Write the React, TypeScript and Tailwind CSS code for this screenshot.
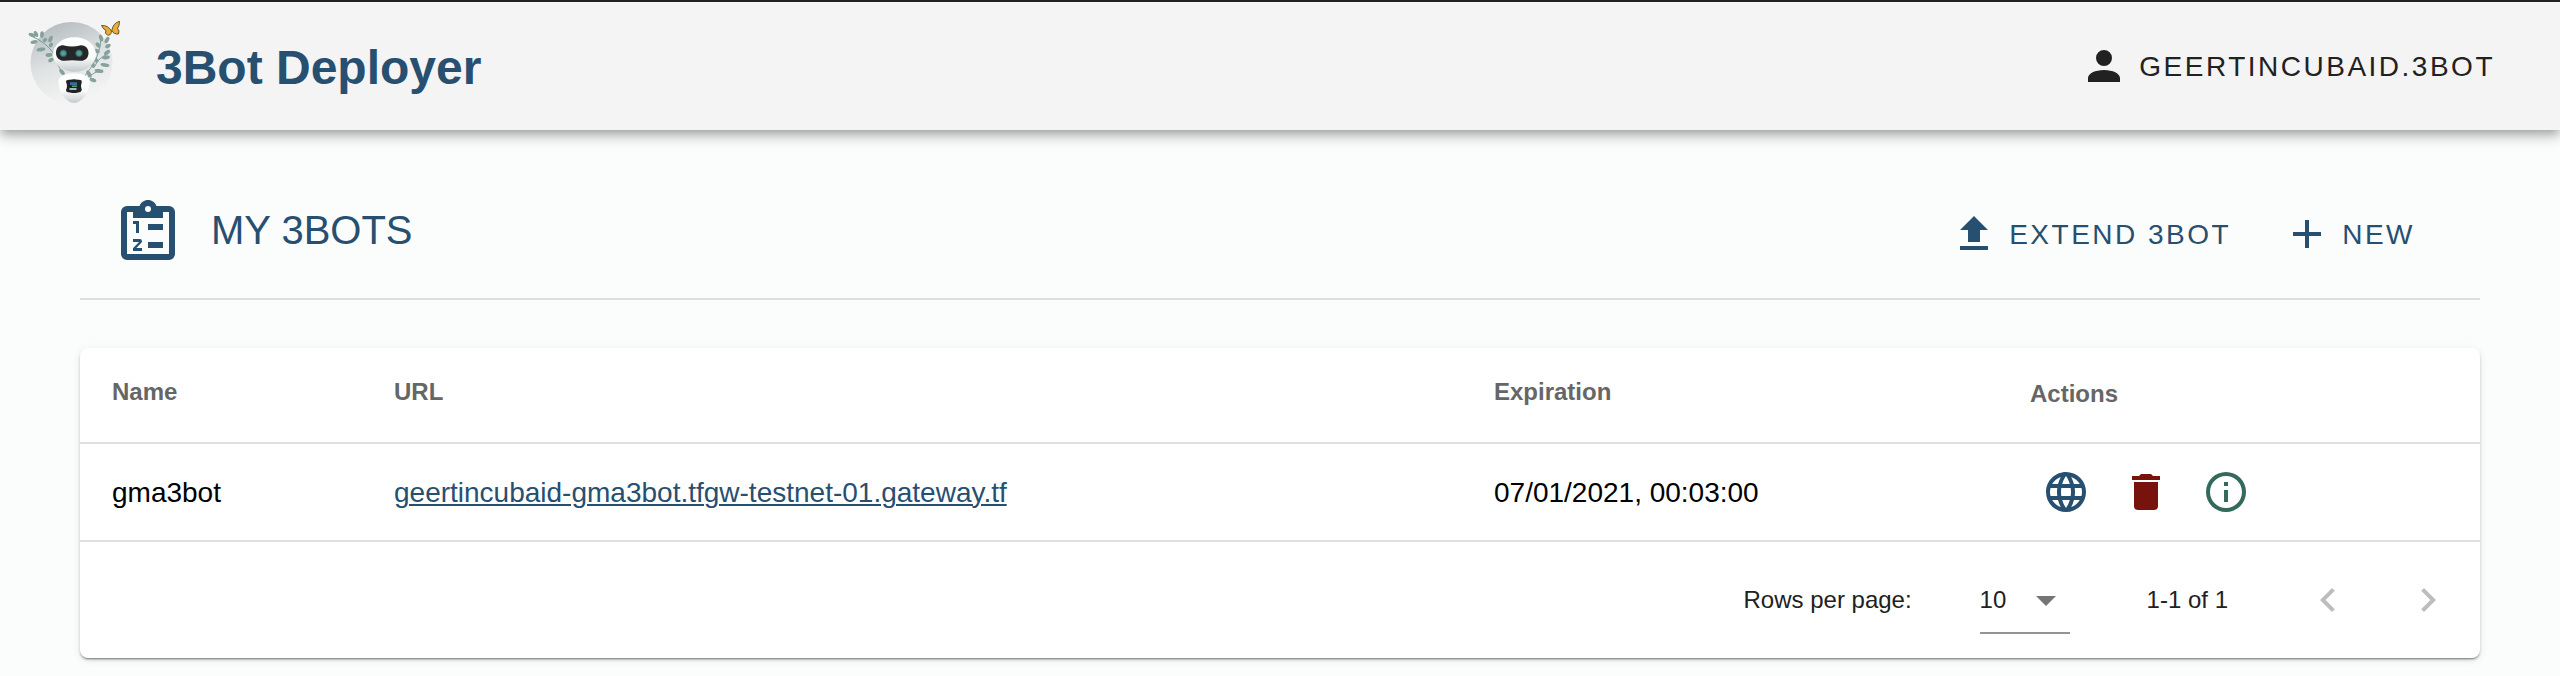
import React from "react";

type IconProps = { d: string; className?: string };

function Icon({ d, className = "" }: IconProps) {
  return (
    <svg viewBox="0 0 24 24" className={`shrink-0 fill-current ${className}`} aria-hidden="true">
      <path fillRule="evenodd" d={d} />
    </svg>
  );
}

const icons = {
  account:
    "M12,4A4,4 0 0,1 16,8A4,4 0 0,1 12,12A4,4 0 0,1 8,8A4,4 0 0,1 12,4M12,14C16.42,14 20,15.79 20,18V20H4V18C4,15.79 7.58,14 12,14Z",
  clipboard:
    "M19,3H14.82C14.4,1.84 13.3,1 12,1C10.7,1 9.6,1.84 9.18,3H5A2,2 0 0,0 3,5V19A2,2 0 0,0 5,21H19A2,2 0 0,0 21,19V5A2,2 0 0,0 19,3M12,3A1,1 0 0,1 13,4A1,1 0 0,1 12,5A1,1 0 0,1 11,4A1,1 0 0,1 12,3M5,5H7V7H17V5H19V19H5V5M7,8H9V12H8V9H7V8M12,9H17V11H12V9M7,14H9.25A0.75,0.75 0 0,1 10,14.75C10,14.95 9.92,15.14 9.79,15.27L8.12,17H10V18H7V17.08L9,15H7V14M12,15H17V17H12V15Z",
  upload: "M9,16V10H5L12,3L19,10H15V16H9M5,20V18H19V20H5Z",
  plus: "M19,13H13V19H11V13H5V11H11V5H13V11H19V13Z",
  web: "M16.36,14C16.44,13.34 16.5,12.68 16.5,12C16.5,11.32 16.44,10.66 16.36,10H19.74C19.9,10.64 20,11.31 20,12C20,12.69 19.9,13.36 19.74,14M14.59,19.56C15.19,18.45 15.65,17.25 15.97,16H18.92C17.96,17.65 16.43,18.93 14.59,19.56M14.34,14H9.66C9.56,13.34 9.5,12.68 9.5,12C9.5,11.32 9.56,10.65 9.66,10H14.34C14.43,10.65 14.5,11.32 14.5,12C14.5,12.68 14.43,13.34 14.34,14M12,19.96C11.17,18.76 10.5,17.43 10.09,16H13.91C13.5,17.43 12.83,18.76 12,19.96M8,8H5.08C6.03,6.34 7.57,5.06 9.4,4.44C8.8,5.55 8.35,6.75 8,8M5.08,16H8C8.35,17.25 8.8,18.45 9.4,19.56C7.57,18.93 6.03,17.65 5.08,16M4.26,14C4.1,13.36 4,12.69 4,12C4,11.31 4.1,10.64 4.26,10H7.64C7.56,10.66 7.5,11.32 7.5,12C7.5,12.68 7.56,13.34 7.64,14M12,4.03C12.83,5.23 13.5,6.57 13.91,8H10.09C10.5,6.57 11.17,5.23 12,4.03M18.92,8H15.97C15.65,6.75 15.19,5.55 14.59,4.44C16.43,5.07 17.96,6.34 18.92,8M12,2C6.47,2 2,6.5 2,12A10,10 0 0,0 12,22A10,10 0 0,0 22,12A10,10 0 0,0 12,2Z",
  trash:
    "M19,4H15.5L14.5,3H9.5L8.5,4H5V6H19M6,19A2,2 0 0,0 8,21H16A2,2 0 0,0 18,19V7H6V19Z",
  info: "M11,9H13V7H11M12,20C7.59,20 4,16.41 4,12C4,7.59 7.59,4 12,4C16.41,4 20,7.59 20,12C20,16.41 16.41,20 12,20M12,2A10,10 0 0,0 2,12A10,10 0 0,0 12,22A10,10 0 0,0 22,12A10,10 0 0,0 12,2M11,17H13V11H11V17Z",
  menuDown: "M7,10L12,15L17,10H7Z",
  left: "M15.41,16.58L10.83,12L15.41,7.41L14,6L8,12L14,18L15.41,16.58Z",
  right: "M8.59,16.58L13.17,12L8.59,7.41L10,6L16,12L10,18L8.59,16.58Z",
};

// [x, y, rotation, length]
const leaves: [number, number, number, number][] = [
  [32, 35, 20, 7], [36, 34, 65, 6.5], [42, 34.5, 95, 6.5], [34, 42, -12, 7],
  [45, 40, -48, 5], [50.5, 39, -68, 7], [41, 49.5, -8, 9], [51, 45, -55, 5],
  [49, 55, -8, 7], [51, 60, -30, 6], [62, 72, 50, 7],
  [101, 38, 72, 7], [107, 40, -60, 7], [98, 45, 50, 6], [108, 46, -28, 6],
  [97, 51, 30, 6], [107, 52.5, -35, 7], [106, 57.5, -8, 8], [105, 65, 10, 9],
  [96, 60, 60, 6], [93, 65, 75, 6], [99, 71, 8, 9], [89, 74, 60, 8], [93, 80, 22, 7],
];

function Logo() {
  return (
    <svg viewBox="26 16 98 92" className="h-[92px] w-[98px] shrink-0" aria-hidden="true">
      <defs>
        <linearGradient id="disc" x1="0.3" y1="0" x2="0.62" y2="0.95">
          <stop offset="0" stopColor="#b5bdc0" />
          <stop offset="0.5" stopColor="#dfe2e3" />
          <stop offset="1" stopColor="#f4f4f4" />
        </linearGradient>
        <linearGradient id="shell" x1="0" y1="0" x2="0" y2="1">
          <stop offset="0" stopColor="#ffffff" />
          <stop offset="0.6" stopColor="#f8f9f9" />
          <stop offset="1" stopColor="#c3cacc" />
        </linearGradient>
        <radialGradient id="eye">
          <stop offset="0" stopColor="#5ba8a3" />
          <stop offset="0.55" stopColor="#47918d" />
          <stop offset="1" stopColor="#242829" />
        </radialGradient>
      </defs>
      <circle cx="71.5" cy="63" r="41" fill="url(#disc)" />
      <g fill="none" stroke="#6f9699" strokeWidth="0.9">
        <path d="M31 36Q46 42 54 54Q58 68 65 76" />
        <path d="M101 37Q101 57 84 77M108 54Q98 58 95 66M103 70Q94 72 88 77" />
      </g>
      <g fill="#86a19a">
        {leaves.map(([x, y, r, w], i) => (
          <ellipse key={i} cx={x} cy={y} rx={w / 2} ry="1.9" transform={`rotate(${r} ${x} ${y})`} />
        ))}
      </g>
      <ellipse cx="74.5" cy="54.5" rx="21.5" ry="17.3" fill="url(#shell)" />
      <path d="M58.500 80Q61 73 74 73.500Q87 73 89.500 80Q90 87 86.500 94Q80 103 74 103Q68 103 61.500 94Q58 87 58.500 80Z" fill="url(#shell)" />
      <path d="M56 53C56 47 60 45 64 45.400Q72 47.500 80 45.400C85 45 88.500 48 88.500 53C88.500 58 85 61.200 80 60.800Q72 59.500 65 60.800C60 61.200 56 58 56 53Z" fill="#252627" />
      <circle cx="63.300" cy="53.300" r="4.200" fill="url(#eye)" />
      <circle cx="79" cy="53.300" r="4.200" fill="url(#eye)" />
      <path d="M66 82Q66 79.500 70 79.800Q74 78.500 78 79.800Q82 79.500 81.800 82Q80 86 81.800 90Q81 92.500 78 92.500Q74 93.600 70 92.500Q66 92.500 66 90Q68 86 66 82Z" fill="#202325" />
      <path d="M70 82.300H77V85H70Z" fill="#386da0" />
      <path d="M72 85.500H77V87H72Z" fill="#579c67" />
      <path d="M69.500 88H76.500V90H69.500Z" fill="#aab6bc" />
      <g stroke="#4b3621" strokeWidth="0.8" fill="#e9ad36" strokeLinejoin="round">
        <path d="M111.500 31Q108 25 101.500 25.500Q103 29 106 30.500Q104 33.500 107.500 35Q111 36 111.500 31Z" />
        <path d="M111.800 30.500Q113 23 119.500 21.300Q119.500 26 117.600 28.500Q120 31 118.500 34Q113.500 34.500 111.800 30.500Z" />
      </g>
    </svg>
  );
}

function AppBar() {
  return (
    <header className="flex h-[130px] items-center justify-between border-t-2 border-[#222] bg-[#f4f4f4] pr-[65px] pl-[26px] shadow-[0_4px_8px_-2px_rgba(0,0,0,0.2),0_8px_10px_0_rgba(0,0,0,0.14),0_2px_20px_0_rgba(0,0,0,0.12)]">
      <div className="flex items-center gap-8">
        <div className="mb-2">
          <Logo />
        </div>
        <h1 className="pt-[3px] text-[48px] leading-[56px] font-bold text-[#274f70]">3Bot Deployer</h1>
      </div>
      <div className="flex items-center gap-[11px] text-[#212121]">
        <Icon d={icons.account} className="size-12" />
        <span className="pt-[2px] text-[28px] leading-[40px] tracking-[2.5px]">GEERTINCUBAID.3BOT</span>
      </div>
    </header>
  );
}

function TextButton({ d, children }: { d: string; children: React.ReactNode }) {
  return (
    <button className="flex items-center gap-[11px] text-[28px] leading-[40px] tracking-[2.5px] text-[#274f70]">
      <Icon d={d} className="size-12" />
      <span className="pt-[2px]">{children}</span>
    </button>
  );
}

const columns = "grid grid-cols-[282px_1100px_536px_1fr] px-8";

function BotsTable() {
  return (
    <section className="mt-12 h-[310px] rounded-lg bg-white shadow-[0_2px_2px_-1px_rgba(0,0,0,0.4),0_2px_3px_0_rgba(0,0,0,0.14),0_2px_10px_0_rgba(0,0,0,0.08)]">
      <div className={`${columns} h-[96px] items-start border-b-2 border-[#e0e0e0] pt-[27px] text-[24px] leading-[34px] font-bold text-[#666]`}>
        <span>Name</span>
        <span>URL</span>
        <span>Expiration</span>
        <span className="pt-[2px]">Actions</span>
      </div>
      <div className={`${columns} h-[98px] items-center border-b-2 border-[#e0e0e0] text-[28px] leading-[40px] text-black`}>
        <span className="pt-[2px]">gma3bot</span>
        <a className="pt-[2px] text-[#274f70] underline decoration-2 underline-offset-[2px]">
          geertincubaid-gma3bot.tfgw-testnet-01.gateway.tf
        </a>
        <span className="pt-[2px]">07/01/2021, 00:03:00</span>
        <div className="flex gap-8 pl-3">
          <Icon d={icons.web} className="size-12 text-[#274f70]" />
          <Icon d={icons.trash} className="size-12 text-[#77130c]" />
          <Icon d={icons.info} className="size-12 text-[#346a5b]" />
        </div>
      </div>
      <footer className="flex h-[116px] items-center justify-end pr-7 text-[24px] leading-[34px] text-[#212121]">
        <span>Rows per page:</span>
        <div className="ml-[68px] flex h-[68px] w-[90px] items-center justify-between border-b-2 border-[#949494] pt-[2px]">
          <span>10</span>
          <Icon d={icons.menuDown} className="size-12 text-[#757575]" />
        </div>
        <span className="ml-[77px]">1-1 of 1</span>
        <Icon d={icons.left} className="ml-[76px] size-12 text-[#bdbdbd]" />
        <Icon d={icons.right} className="ml-[52px] size-12 text-[#bdbdbd]" />
      </footer>
    </section>
  );
}

export default function App() {
  return (
    <div className="h-[676px] overflow-hidden bg-[#fbfdfc] font-['Liberation_Sans',Arial,sans-serif]">
      <AppBar />
      <main className="px-20">
        <div className="flex h-[170px] items-start justify-between border-b-2 border-[#dddfde] pr-[65px] pl-8">
          <div className="flex items-center gap-[27px] pt-[67px] text-[#274f70]">
            <Icon d={icons.clipboard} className="size-[72px]" />
            <h2 className="-mt-[6px] text-[40px] leading-[48px]">MY 3BOTS</h2>
          </div>
          <div className="flex gap-[52px] pt-[80px]">
            <TextButton d={icons.upload}>EXTEND 3BOT</TextButton>
            <TextButton d={icons.plus}>NEW</TextButton>
          </div>
        </div>
        <BotsTable />
      </main>
    </div>
  );
}
